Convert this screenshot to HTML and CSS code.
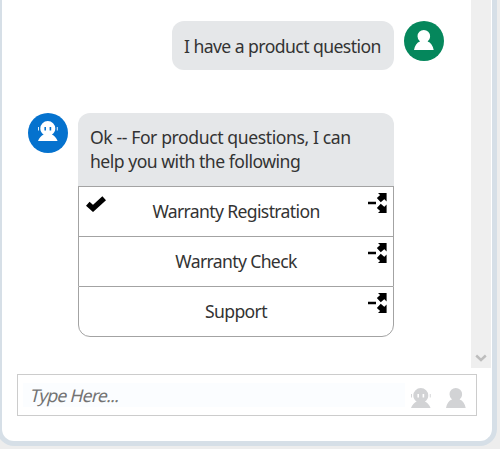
FILE: index.html
```html
<!DOCTYPE html>
<html lang="en">
<head>
<meta charset="utf-8">
<title>Chat</title>
<link rel="stylesheet" href="styles.css">
</head>
<body>
<svg class="defs" aria-hidden="true">
  <symbol id="person" viewBox="0 0 20 20"><path d="M9.8 0a6.3 6.3 0 0 1 6.3 6.3c0 2.1-1 3.9-2.5 5.1 3 1 5.4 4 6.1 8.6H0c.7-4.6 3-7.6 6-8.6a6.3 6.3 0 0 1-2.5-5.1A6.3 6.3 0 0 1 9.8 0z"/></symbol>
  <symbol id="robot" viewBox="0 0 20 20"><path fill-rule="evenodd" d="M9.8 0a7.5 7.5 0 0 1 7.5 7.5c0 2.7-1.4 4.8-3.4 6 2.4 1.1 4.4 3.3 5.7 6.5H0c1.3-3.2 3.3-5.4 5.7-6.5-2-1.2-3.4-3.3-3.4-6A7.5 7.5 0 0 1 9.8 0zM6.4 6v3.6H8V6zM11.6 6v3.6h1.6V6zM0 6h.9v3.6H0zM18.8 6h.9v3.6h-.9z"/></symbol>
  <symbol id="branch" viewBox="0 0 20 22"><path d="M1 9.8h8v2.4H1zM11 1H19.6v8.6zM11 21H19.6v-8.6z"/><path d="M11.8 8.2L17 3.5M11.8 13.8L17 18.5" stroke="#000" stroke-width="5.8"/></symbol>
</svg>
<main class="panel">
  <div class="log">
    <div class="messages">
      <div class="row user">
        <p class="bubble"><span class="t1">I have a product question</span></p>
        <div class="avatar green"><svg><use href="#person"/></svg></div>
      </div>
      <div class="row bot">
        <div class="avatar blue"><svg><use href="#robot"/></svg></div>
        <div class="card">
          <p class="prompt"><span class="t2">Ok -- For product questions, I can</span><br><span class="t3">help you with the following</span></p>
          <div class="option"><svg class="check" viewBox="0 0 20 16"><path d="M1.8 7.8L7 12.4 18.2 2.2" fill="none" stroke="#000" stroke-width="5.4"/></svg><span class="t4">Warranty Registration</span><svg class="branch"><use href="#branch"/></svg></div>
          <div class="option"><span class="t5">Warranty Check</span><svg class="branch"><use href="#branch"/></svg></div>
          <div class="option"><span class="t6">Support</span><svg class="branch"><use href="#branch"/></svg></div>
        </div>
      </div>
    </div>
    <div class="scrollbar"><svg viewBox="0 0 12 8"><path d="M1.2 1.5L6 6l4.8-4.5" fill="none" stroke="#bdbdbd" stroke-width="2.4"/></svg></div>
  </div>
  <div class="composer">
    <div class="field"><span class="t7">Type Here...</span></div>
    <svg><use href="#robot"/></svg>
    <svg><use href="#person"/></svg>
  </div>
</main>
</body>
</html>
```
FILE: styles.css
```css
* { box-sizing: border-box; }
body {
  margin: 0;
  height: 449px;
  overflow: hidden;
  background: #ededed;
  color: #333;
  font: 17.6px/24px "Noto Sans", "Open Sans", sans-serif;
}
p { margin: 0; }
span { white-space: nowrap; }
.defs { display: block; width: 0; height: 0; position: absolute; }
.panel {
  width: 500px;
  height: 446px;
  margin-left: -3px;
  border: 5px solid #d6dfe7;
  border-top: 0;
  border-radius: 0 0 17px 17px;
  background: #fff;
}
.log { display: flex; height: 368px; width: 489px; }
.messages { width: 469px; padding: 21px 27px 0 26px; }
.scrollbar {
  width: 20px;
  background: #efefef;
  display: flex;
  align-items: flex-end;
  justify-content: center;
  padding-bottom: 6px;
}
.scrollbar svg { width: 12px; height: 8px; }
.row { display: flex; gap: 10px; }
.user { justify-content: flex-end; }
.bot { margin-top: 43px; }
.bubble {
  width: 222px;
  height: 49px;
  padding: 13px 12px 0;
  border-radius: 12px;
  background: #e5e7e9;
}
.avatar {
  width: 40px;
  height: 40px;
  flex: none;
  border-radius: 50%;
  display: flex;
  justify-content: center;
  padding-top: 9px;
  fill: #fff;
}
.avatar svg { width: 20px; height: 20px; }
.green { background: #05875c; }
.blue { background: #0572ce; padding-top: 8px; }
.card { width: 316px; }
.prompt {
  height: 73px;
  padding: 12px 12px 0;
  border-radius: 12px 12px 0 0;
  background: #e5e7e9;
}
.option {
  position: relative;
  height: 50px;
  border: 1px solid #a3a3a3;
  border-bottom: 0;
  display: flex;
  justify-content: center;
  padding-top: 12px;
}
.option:last-child {
  height: 51px;
  border-bottom: 1px solid #a3a3a3;
  border-radius: 0 0 12px 12px;
}
.check { position: absolute; left: 7px; top: 9px; width: 20px; height: 16px; }
.branch { position: absolute; right: 6px; top: 5px; width: 20px; height: 22px; }
.composer {
  width: 460px;
  height: 42px;
  margin: 6px 0 0 15px;
  border: 1px solid #ccc;
  display: flex;
  align-items: center;
  padding: 0 10px 0 5px;
  fill: #d2d3d5;
}
.field {
  width: 382px;
  height: 24px;
  padding-left: 7px;
  background: #fbfdff;
  color: #737373;
}
.composer svg { width: 20px; height: 20px; flex: none; margin-top: 6px; }
.composer svg:nth-of-type(1) { margin-left: 6px; }
.composer svg:nth-of-type(2) { margin-left: 15px; }
.t1 { letter-spacing: -0.57px; }
.t2 { letter-spacing: -0.41px; }
.t3 { letter-spacing: -0.5px; }
.t4, .t5, .t6 { letter-spacing: -0.65px; }
.t7 { display: inline-block; transform: skewX(-14deg); letter-spacing: -0.75px; margin-left: 1px; }
```
